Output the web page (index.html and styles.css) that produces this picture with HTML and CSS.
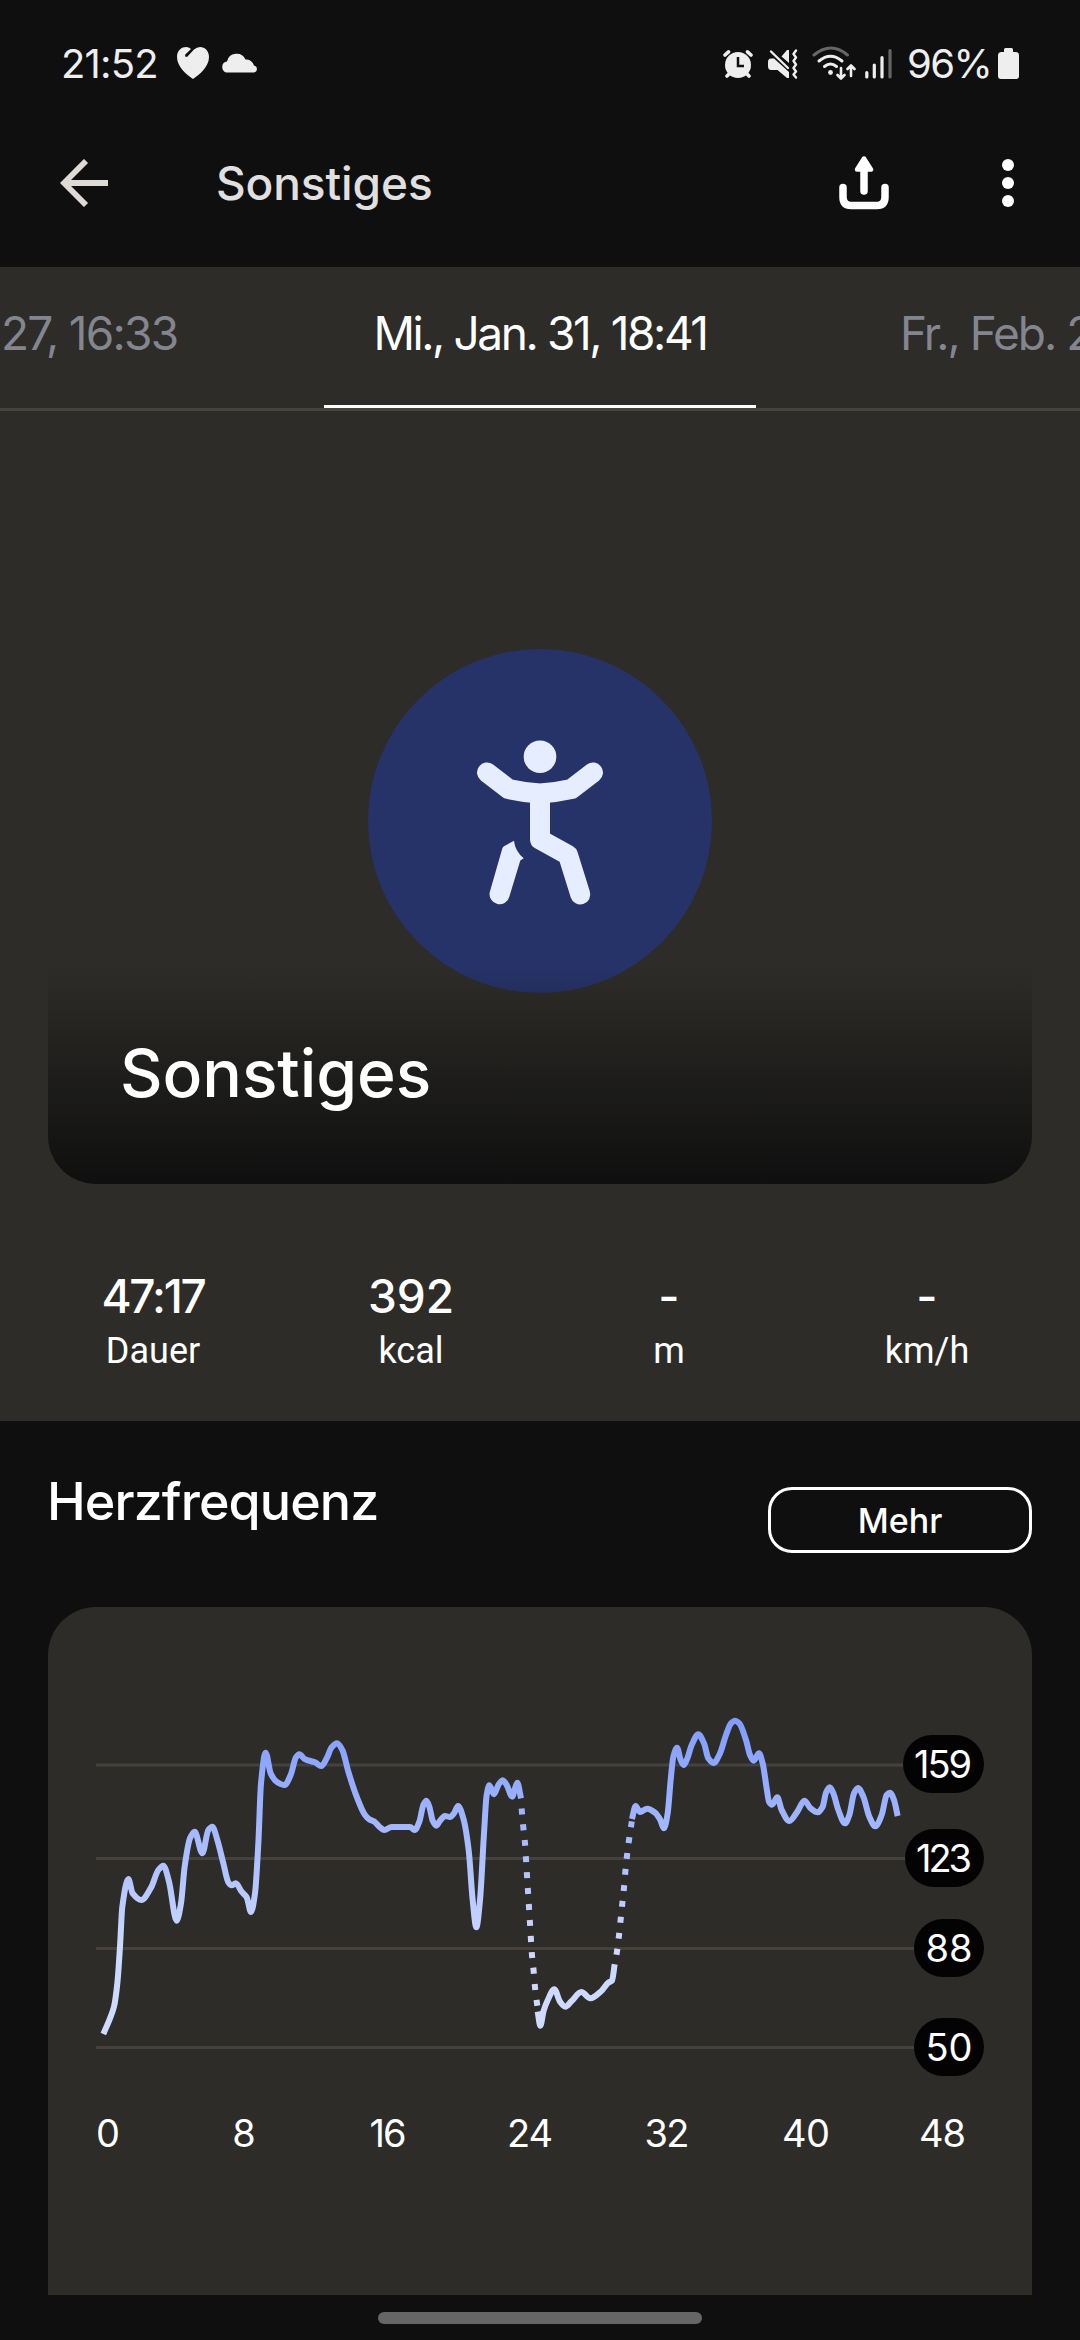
FILE: index.html
```html
<!DOCTYPE html>
<html lang="de">
<head>
<meta charset="utf-8">
<title>Sonstiges</title>
<link rel="stylesheet" href="styles.css">
</head>
<body>
<div class="screen">
  <header class="status-bar">
    <span class="clock">21:52</span>
    <svg class="ic-heart" viewBox="0 0 32 32" width="32" height="32"><path fill="#eee" d="M16 32C10 28 0 20 0 10C0 3 5 0 9 0Q12 0 14 2L8.300 7.500Q7.500 10 10 10L17 2.500Q20 0 23 0C28 0 32 4 32 10C32 20 22 28 16 32Z"/></svg>
    <svg class="ic-cloud" viewBox="0 0 36 21" width="36" height="21"><path fill="#eee" d="M5 20.500A4.800 5.500 0 0 1 5 9.500A9.800 9.800 0 0 1 23.500 7.500A8 8 0 0 1 32 13.500A3.800 3.600 0 0 1 32 20.500Z"/></svg>
    <span class="spacer"></span>
    <svg class="ic-alarm" viewBox="0 0 30 30" width="30" height="30"><g fill="none" stroke="#eee" stroke-width="3.600" stroke-linecap="round"><path d="M2 6L5.500 2.800M24.500 2.800L28 6M4 27L7 24M26 27L23 24"/></g><circle cx="15" cy="16" r="13" fill="#eee"/><path d="M15 8V17H21" fill="none" stroke="#0f0f0f" stroke-width="2.500"/></svg>
    <svg class="ic-mute" viewBox="0 0 30 30" width="30" height="30"><path fill="#eee" d="M3 9.500H6L21 23V29H19L9.500 21H3Q0 21 0 17V13Q0 9.500 3 9.500ZM13.500 7.500L19 1H21V14Z"/><path d="M3 2.500L20 19" stroke="#eee" stroke-width="2.400" stroke-linecap="round"/><path d="M28 1.500L25.500 5L28 8.500L25.500 12L28 15.500L25.500 19L28 22.500L25.500 25.500L28 28.500" fill="none" stroke="#eee" stroke-width="2.400" stroke-linejoin="round" stroke-linecap="round"/></svg>
    <svg class="ic-wifi" viewBox="0 0 44 34" width="44" height="34"><g fill="none" stroke-width="3" stroke-linecap="round"><path stroke="#666" d="M2 9Q19 -5 35.500 9"/><path stroke="#eee" d="M7 15Q18.500 5.500 30 15M12.500 20.500Q18.500 15.500 24.500 20.500"/></g><circle cx="18.500" cy="26.500" r="2.400" fill="#eee"/><path fill="none" stroke="#eee" stroke-width="2.600" stroke-linecap="round" stroke-linejoin="round" d="M29 22V32M25.500 29L29 32.500L32.500 29M39 30V20M35.500 23L39 19.500L42.500 23"/></svg>
    <svg class="ic-signal" viewBox="0 0 27 30" width="27" height="30"><g stroke-width="3.200" stroke-linecap="round"><path stroke="#eee" d="M1.800 23.500V28M9.300 16V28M17 8.500V28"/><path stroke="#666" d="M25 1.700V28"/></g></svg>
    <span class="battery-text">96%</span>
    <svg class="ic-battery" viewBox="0 0 21 31" width="21" height="31"><path fill="#eee" d="M6 4V1.500Q6 0 7.500 0H13.500Q15 0 15 1.500V4H17.500Q21 4 21 7.500V28Q21 31 18 31H3Q0 31 0 28V7.500Q0 4 3.500 4Z"/></svg>
  </header>

  <nav class="app-bar">
    <svg class="ic-back" viewBox="0 0 48 48" width="48" height="48"><path d="M48 24H4M26 2L4 24L26 46" fill="none" stroke="#dedad6" stroke-width="5.800"/></svg>
    <h1 class="app-title">Sonstiges</h1>
    <span class="spacer"></span>
    <svg class="ic-share" viewBox="0 0 50 54" width="50" height="54"><path d="M4 31.500V41Q4 49.500 12 49.500H38Q46 49.500 46 41V31.500M25 35V12" fill="none" stroke="#fff" stroke-width="7.500" stroke-linecap="round"/><path d="M25 2.500L32 13.500H18Z" fill="#fff" stroke="#fff" stroke-width="4.500" stroke-linejoin="round"/></svg>
    <svg class="ic-more" viewBox="0 0 12 48" width="12" height="48"><g fill="#fff"><circle cx="6" cy="6" r="6"/><circle cx="6" cy="24" r="6"/><circle cx="6" cy="42" r="6"/></g></svg>
  </nav>

  <section class="summary">
    <div class="tabs">
      <div class="tab tab-prev">27, 16:33</div>
      <div class="tab tab-active">Mi., Jan. 31, 18:41</div>
      <div class="tab tab-next">Fr., Feb. 2</div>
    </div>
    <div class="hero">
      <svg class="hero-icon" viewBox="0 0 344 344" width="344" height="344">
        <circle cx="172" cy="172" r="172" fill="#263368"/>
        <circle cx="172" cy="107.700" r="16.300" fill="#e6edff"/>
        <g fill="none" stroke="#e6edff" stroke-width="20" stroke-linecap="round" stroke-linejoin="round">
          <path d="M119 123.500L140.500 140Q156 143.500 172 144.500Q188 143.500 203.500 140L225 123.500"/>
          <path d="M172 146V190.500L200 206L212.300 245.500"/>
        </g>
        <path fill="#e6edff" d="M146 191.700L136 197.300Q134.700 198 134.300 199.500L121.800 243A10 10 0 0 0 141.400 247.500L152.300 211.500L155.700 209.300Q147 202 146 191.700Z"/>
      </svg>
      <div class="hero-caption">Sonstiges</div>
    </div>
    <div class="stats">
      <div class="stat"><b class="stat-value stat-time">47:17</b><span class="stat-unit">Dauer</span></div>
      <div class="stat"><b class="stat-value">392</b><span class="stat-unit">kcal</span></div>
      <div class="stat"><b class="stat-value">-</b><span class="stat-unit">m</span></div>
      <div class="stat"><b class="stat-value">-</b><span class="stat-unit">km/h</span></div>
    </div>
  </section>

  <section class="heart-rate">
    <div class="section-head">
      <h2 class="section-title">Herzfrequenz</h2>
      <button class="more-button">Mehr</button>
    </div>
    <div class="chart-card">
      <svg class="chart" viewBox="48 1607 984 688" width="984" height="688">
        <defs>
          <linearGradient id="pulse" gradientUnits="userSpaceOnUse" x1="0" y1="1715" x2="0" y2="2040">
            <stop offset="0" stop-color="#7f9bff"/>
            <stop offset="0.480" stop-color="#b1c3ff"/>
            <stop offset="0.720" stop-color="#ccd9ff"/>
            <stop offset="1" stop-color="#cfdcff"/>
          </linearGradient>
        </defs>
        <path class="grid" d="M96 1765H940M96 1858.500H940M96 1948.500H940M96 2047.500H940"/>
        <g id="series" class="series"></g>
        <g class="badge">
          <rect x="903" y="1735" width="81" height="58" rx="29"/>
          <rect x="905" y="1829" width="79" height="58" rx="29"/>
          <rect x="914" y="1919" width="70" height="58" rx="29"/>
          <rect x="914" y="2018" width="70" height="58" rx="29"/>
        </g>
        <g class="level">
          <text x="914" y="1778" textLength="58">159</text>
          <text x="916" y="1872" textLength="56">123</text>
          <text x="925.500" y="1962" textLength="47">88</text>
          <text x="925.500" y="2061" textLength="47">50</text>
        </g>
        <g class="minute">
          <text x="108" y="2147">0</text>
          <text x="244" y="2147">8</text>
          <text x="388" y="2147" textLength="37">16</text>
          <text x="530" y="2147" textLength="46">24</text>
          <text x="667" y="2147" textLength="45">32</text>
          <text x="806" y="2147" textLength="48">40</text>
          <text x="942.500" y="2147" textLength="47">48</text>
        </g>
      </svg>
    </div>
  </section>
  <footer class="gesture-bar"><span class="handle"></span></footer>
</div>
<script src="chart.js"></script>
</body>
</html>
```
FILE: styles.css
```css
* { box-sizing: border-box; }
body { margin: 0; background: #0f0f0f; }
.screen {
  width: 1080px; height: 2340px; overflow: hidden;
  display: flex; flex-direction: column;
  background: #0f0f0f; color: #fff;
  font-family: Inter, "Liberation Sans", sans-serif;
}
svg { display: block; flex: none; }
.spacer { flex: 1; }

.status-bar {
  height: 126px; display: flex; align-items: center;
  padding: 0 61px; color: #eee;
}
.clock { width: 116px; font-size: 40px; letter-spacing: -0.8px; }
.ic-cloud { margin-left: 13px; margin-top: -2px; }
.ic-mute { margin-left: 15px; }
.ic-alarm, .ic-mute, .ic-signal { margin-top: 2px; }
.ic-wifi { margin-left: 14px; }
.ic-signal { margin-left: 9px; }
.battery-text { width: 91px; margin-left: 15px; font-size: 40px; letter-spacing: -1.5px; }

.app-bar { height: 141px; display: flex; align-items: center; padding: 0 66px 27px 60px; }
.app-title { margin: 0 0 0 108px; font-size: 46px; font-weight: 520; line-height: 60px; letter-spacing: -0.1px; color: #e0e0e0; }
.ic-share { margin-right: 113px; }

.summary { height: 1154px; background: #2d2c28; }
.tabs {
  height: 144px; display: flex; align-items: flex-start;
  border-bottom: 3px solid #45443f;
}
.tab { height: 141px; flex: none; padding-top: 36px; font-size: 46px; line-height: 60px; letter-spacing: -2px; white-space: nowrap; color: #83858f; }
.tab-prev { width: 324px; padding-left: 1px; letter-spacing: -1.7px; }
.tab-active { width: 432px; border-bottom: 3px solid #fff; color: #fff; letter-spacing: -2.4px; text-align: center; }
.tab-next { width: 324px; padding-left: 144px; }
.hero {
  height: 773px; margin: 0 48px; padding-top: 238px; position: relative;
  display: flex; justify-content: center; align-items: flex-start;
}
.hero-caption {
  position: absolute; left: 0; right: 0; bottom: 0; height: 224px;
  padding: 73px 72px 0; border-radius: 0 0 48px 48px;
  background: linear-gradient(rgba(15, 15, 15, 0) 6px, #0f0f0f);
  font-size: 66px; line-height: 80px; font-weight: 540; letter-spacing: -0.1px;
}
.stats { display: grid; grid-template-columns: repeat(4, 258px); padding: 82px 24px 0; }
.stat { display: flex; flex-direction: column; align-items: center; }
.stat-value { font-size: 46px; line-height: 61px; font-weight: 520; }
.stat-time { letter-spacing: -2.2px; }
.stat-unit { font-family: Roboto, sans-serif; font-size: 36px; line-height: 48px; }

.heart-rate { padding: 0 48px; height: 874px; }
.section-head { height: 186px; display: flex; justify-content: space-between; }
.section-title { margin: 49px 0 0 -1px; font-size: 52px; line-height: 64px; font-weight: 530; letter-spacing: -0.9px; }
.more-button {
  width: 264px; height: 66px; margin-top: 66px; padding: 1px 0 0;
  border: 3px solid #fff; border-radius: 24px; background: none; color: #fff;
  font: 500 34px/60px Inter, sans-serif;
}
.chart-card { height: 688px; border-radius: 48px 48px 0 0; background: #2d2c28; }
.grid { fill: none; stroke: #45423e; stroke-width: 3; }
.series { fill: none; stroke: url(#pulse); stroke-width: 6; }
.series .dotted { stroke-dasharray: 6 10; stroke-dashoffset: 6; }
.badge { fill: #030303; }
.level, .minute { fill: #fff; font-size: 38px; }
.minute { text-anchor: middle; }

.gesture-bar { height: 45px; padding-top: 17px; display: flex; justify-content: center; }
.handle { width: 324px; height: 12px; border-radius: 6px; background: #666; }
```
FILE: chart.js
```js
// Heart rate samples, split where the sensor lost contact (dotted parts).
const segments = [
  { origin: 80, points: [[70,1002],[90,955],[102,920],[112,850],[120,740],[127,620],[145,537],[158,580],[184,600],[213,563],[235,510],[250,497],[267,545],[290,662],[303,610],[314,500],[330,415],[344,395],[367,460],[385,390],[397,380],[412,420],[430,490],[445,547],[455,556],[467,550],[485,575],[500,592],[513,636],[525,580],[535,430],[543,250],[557,158],[572,220],[590,245],[614,255],[632,225],[648,172],[658,163],[675,178],[705,187],[724,198],[740,175],[755,142],[771,130],[787,150],[805,215],[830,290],[855,345],[868,358],[882,364],[900,382],[913,390],[935,381],[990,381],[1004,390],[1018,365],[1030,315],[1039,302],[1048,320],[1058,362],[1069,377],[1080,362],[1095,348],[1110,351],[1122,340],[1134,318],[1150,355],[1166,450],[1178,600],[1189,682],[1200,600],[1212,400],[1220,285],[1228,256],[1242,283],[1255,255],[1268,241],[1280,255],[1297,290],[1305,265],[1312,248],[1323,295]] },
  { origin: 330, dotted: true, points: [[573,295],[575.5,334],[580,382],[585,430],[588,478],[594,574],[600,670],[606,766],[611,814],[615,862],[621,910],[625,935]] },
  { origin: 330, points: [[623,935],[631,977],[641,932],[652,903],[673,868],[690,905],[706,920],[725,903],[754,876],[781,895],[815,872],[835,848],[846,842],[854,793]] },
  { origin: 600, dotted: true, points: [[44,793],[51,754],[57,706],[62,658],[67,610],[72,563],[76,515],[81,467],[87,420],[94,373],[96,360]] },
  { origin: 600, points: [[96,357],[107,318],[120,336],[142,326],[165,338],[180,358],[192,385],[203,340],[212,240],[220,170],[231,143],[242,180],[251,195],[262,175],[275,135],[295,103],[312,130],[325,175],[341,189],[360,160],[378,105],[393,70],[405,62],[418,70],[438,120],[450,165],[461,182],[477,160],[488,190],[500,265],[507,305],[516,314],[532,292],[545,330],[568,363],[592,335],[613,302],[632,325],[653,337],[668,320],[678,278],[689,262],[700,280],[715,330],[735,370],[748,345],[762,280],[774,264],[790,290],[808,350],[826,379],[845,345],[860,285],[870,278],[882,300],[893,348]] }
];

// Monotone cubic curve: peaks stay flat and never overshoot.
function smooth(points) {
  const last = points.length - 1;
  const slope = i => (points[i + 1][1] - points[i][1]) / (points[i + 1][0] - points[i][0]);
  const tangents = points.map((p, i) => {
    if (i === 0) return slope(0);
    if (i === last) return slope(last - 1);
    const a = slope(i - 1), b = slope(i);
    return a * b <= 0 ? 0 : 2 * a * b / (a + b);
  });
  let d = "M" + points[0];
  for (let i = 0; i < last; i++) {
    const [x0, y0] = points[i], [x1, y1] = points[i + 1], h = (x1 - x0) / 3;
    d += `C${x0 + h},${y0 + h * tangents[i]} ${x1 - h},${y1 - h * tangents[i + 1]} ${x1},${y1}`;
  }
  return d;
}

for (const { origin, dotted, points } of segments) {
  const path = document.createElementNS("http://www.w3.org/2000/svg", "path");
  path.setAttribute("d", smooth(points.map(([x, y]) => [origin + x / 3, 1700 + y / 3])));
  if (dotted) path.setAttribute("class", "dotted");
  document.getElementById("series").append(path);
}
```
